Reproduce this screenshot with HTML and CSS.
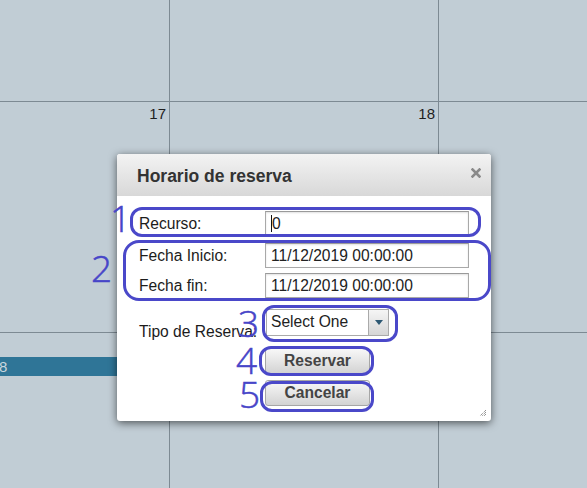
FILE: index.html
```html
<!DOCTYPE html>
<html lang="es">
<head>
<meta charset="utf-8">
<title>Horario de reserva</title>
<link rel="stylesheet" href="styles.css">
</head>
<body>
<div class="calendar">
  <div class="cell"></div>
  <div class="cell"></div>
  <div class="cell"></div>
  <div class="cell"><span class="daynum">17</span></div>
  <div class="cell"><span class="daynum">18</span></div>
  <div class="cell"></div>
  <div class="cell"><div class="event">8</div></div>
  <div class="cell"></div>
  <div class="cell"></div>
</div>

<div class="dialog">
  <div class="dialog-title">
    <span class="title-text">Horario de reserva</span>
    <svg class="close" width="10" height="10" viewBox="0 0 10 10"><path d="M1.5 1.5 L8.5 8.5 M8.5 1.5 L1.5 8.5" stroke="#8a8a8a" stroke-width="2.6" stroke-linecap="square"/></svg>
  </div>
  <div class="dialog-body">
    <div class="row r1"><label class="lbl">Recurso:</label><div class="input"><span class="caret"></span>0</div></div>
    <div class="row r2"><label class="lbl">Fecha Inicio:</label><div class="input">11/12/2019 00:00:00</div></div>
    <div class="row r3"><label class="lbl">Fecha fin:</label><div class="input">11/12/2019 00:00:00</div></div>
    <div class="row r4"><label class="lbl tipo">Tipo de Reserva:</label>
      <div class="select"><span class="sel-text">Select One</span><span class="sel-btn"><svg width="8" height="5" viewBox="0 0 8 5"><path d="M0 0 H8 L4 5 Z" fill="#2d5873"/></svg></span></div>
    </div>
    <div class="buttons">
      <div class="btn b1">Reservar</div>
      <div class="btn b2">Cancelar</div>
    </div>
  </div>
  <svg class="resize" width="8" height="8" viewBox="0 0 8 8"><path d="M7 1 L1 7 M7 3 L3 7 M7 5 L5 7" stroke="#666" stroke-width="1" stroke-dasharray="1 1"/></svg>
</div>

<div class="anno box1"></div>
<div class="anno box2"></div>
<div class="anno box3"></div>
<div class="anno box4"></div>
<div class="anno box5"></div>
<span class="num n1">1</span>
<span class="num n2">2</span>
<span class="num n3">3</span>
<span class="num n4">4</span>
<span class="num n5">5</span>
</body>
</html>
```

FILE: styles.css
```css
html, body {
  margin: 0;
  padding: 0;
}
body {
  width: 587px;
  height: 488px;
  overflow: hidden;
  position: relative;
  font-family: "Liberation Sans", Arial, sans-serif;
  background: #c1cdd5;
}
.calendar {
  display: grid;
  grid-template-columns: 169px 268px 148px;
  grid-template-rows: 101px 230px 155px;
  gap: 1px;
  background: #7d8a93;
  width: 587px;
  height: 488px;
}
.cell {
  background: #c1cdd5;
  position: relative;
  display: flex;
  flex-direction: column;
  align-items: flex-end;
}
.daynum {
  font-size: 15px;
  color: #1e1e1e;
  margin-top: 3px;
  margin-right: 3px;
  line-height: 18px;
}
.event {
  align-self: stretch;
  margin-top: 24px;
  height: 19px;
  background: #2f7597;
  color: #c9d6de;
  font-size: 15px;
  line-height: 19px;
  text-indent: -1px;
}
.dialog {
  position: absolute;
  left: 117px;
  top: 154px;
  width: 374px;
  height: 267px;
  background: #fff;
  border-radius: 3px;
  box-shadow: 0 2px 9px rgba(0, 0, 0, 0.6);
  overflow: hidden;
}
.dialog-title {
  height: 42px;
  background: linear-gradient(#f3f3f3, #d8d8d8);
  display: flex;
  align-items: center;
  padding-left: 20px;
  position: relative;
}
.title-text {
  font-weight: bold;
  font-size: 17.5px;
  color: #333;
  margin-top: 3px;
}
.close {
  position: absolute;
  left: 354px;
  top: 14px;
}
.dialog-body {
  padding-left: 22px;
  display: flex;
  flex-direction: column;
}
.row {
  display: flex;
  align-items: center;
  height: 25px;
}
.r1 { margin-top: 15px; }
.r2 { margin-top: 7px; }
.r3 { margin-top: 5px; }
.r4 { margin-top: 11px; height: 27px; align-items: flex-start; }
.lbl {
  width: 126px;
  font-size: 15.6px;
  color: #1c1c1c;
  line-height: 18px;
}
.tipo {
  margin-top: 14px;
  white-space: nowrap;
}
.input {
  box-sizing: border-box;
  width: 204px;
  height: 25px;
  border: 1px solid #a9a9a9;
  border-top-color: #9a9a9a;
  box-shadow: inset 0 1px 2px rgba(0,0,0,0.12);
  font-size: 15.6px;
  color: #222;
  line-height: 23px;
  padding-left: 5px;
  display: flex;
  align-items: center;
}
.caret {
  display: inline-block;
  width: 1px;
  height: 17px;
  background: #111;
  margin-right: 0;
}
.select {
  box-sizing: border-box;
  width: 123px;
  height: 27px;
  margin-left: 1px;
  border: 1px solid #aaa;
  display: flex;
  background: #fff;
}
.sel-text {
  flex: 1;
  font-size: 15.6px;
  color: #222;
  line-height: 24px;
  padding-left: 4px;
}
.sel-btn {
  width: 19px;
  border-left: 1px solid #aaa;
  background: linear-gradient(#f5f5f5, #d6d6d6);
  display: flex;
  align-items: center;
  justify-content: center;
}
.buttons {
  display: flex;
  flex-direction: column;
  gap: 6px;
  margin-top: 12px;
  margin-left: 126px;
}
.btn {
  box-sizing: border-box;
  width: 105px;
  height: 26px;
  border: 1px solid #a6a6a6;
  border-radius: 3px;
  background: linear-gradient(#f8f8f8, #d3d3d3);
  font-weight: bold;
  font-size: 15.6px;
  color: #444;
  text-align: center;
  line-height: 24px;
}
.resize {
  position: absolute;
  right: 4px;
  bottom: 4px;
}
.anno {
  position: absolute;
  box-sizing: border-box;
  border: 3px solid #4a48c9;
  border-radius: 12px;
}
.box1 { left: 130px; top: 207px; width: 351px; height: 30px; }
.box2 { left: 123px; top: 240px; width: 368px; height: 61px; border-radius: 16px; }
.box3 { left: 262px; top: 305px; width: 136px; height: 37px; }
.box4 { left: 259px; top: 346px; width: 115px; height: 30px; }
.box5 { left: 260px; top: 381px; width: 114px; height: 31px; }
.num {
  position: absolute;
  font-family: "Open Sans", "Liberation Sans", sans-serif;
  font-weight: 300;
  font-size: 37px;
  line-height: 36px;
  color: #4745c8;
  -webkit-text-stroke: 0.5px #4745c8;
}
.n1 { left: 110px; top: 200px; }
.n2 { left: 91px; top: 250px; }
.n3 { left: 238px; top: 305px; }
.n4 { left: 236px; top: 342px; }
.n5 { left: 239px; top: 376px; }
```
